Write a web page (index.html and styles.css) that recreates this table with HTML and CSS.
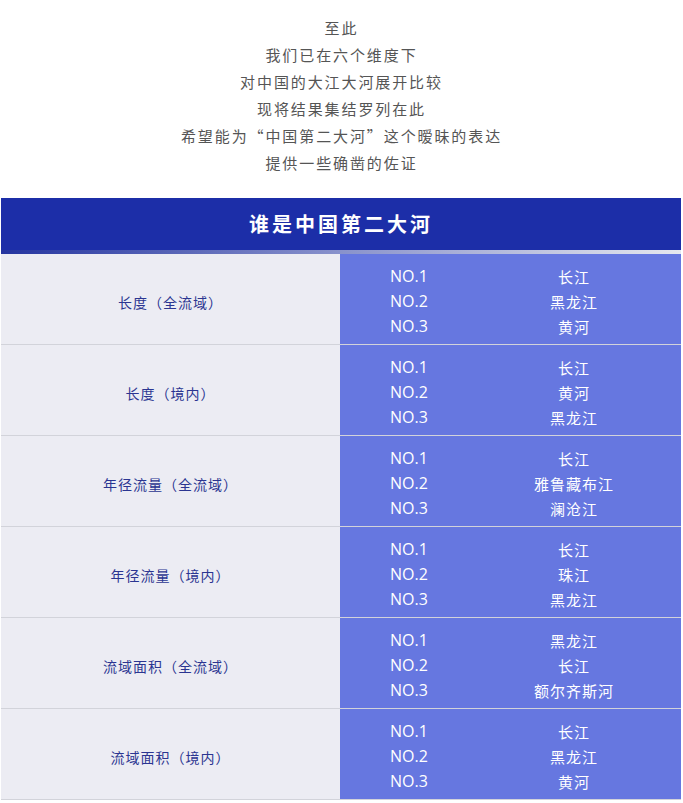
FILE: index.html
```html
<!DOCTYPE html>
<html lang="zh">
<head>
<meta charset="utf-8">
<link rel="stylesheet" href="styles.css">
</head>
<body>
<div class="intro">
  <p>至此</p>
  <p>我们已在六个维度下</p>
  <p>对中国的大江大河展开比较</p>
  <p>现将结果集结罗列在此</p>
  <p>希望能为“中国第二大河”这个暧昧的表达</p>
  <p>提供一些确凿的佐证</p>
</div>
<div class="table">
  <div class="title">谁是中国第二大河</div>
  <div class="strip"></div>
  <div class="row">
    <div class="label">长度（全流域）</div>
    <div class="ranks">
      <span class="no">NO.1</span><span class="name">长江</span>
      <span class="no">NO.2</span><span class="name">黑龙江</span>
      <span class="no">NO.3</span><span class="name">黄河</span>
    </div>
  </div>
  <div class="row">
    <div class="label">长度（境内）</div>
    <div class="ranks">
      <span class="no">NO.1</span><span class="name">长江</span>
      <span class="no">NO.2</span><span class="name">黄河</span>
      <span class="no">NO.3</span><span class="name">黑龙江</span>
    </div>
  </div>
  <div class="row">
    <div class="label">年径流量（全流域）</div>
    <div class="ranks">
      <span class="no">NO.1</span><span class="name">长江</span>
      <span class="no">NO.2</span><span class="name">雅鲁藏布江</span>
      <span class="no">NO.3</span><span class="name">澜沧江</span>
    </div>
  </div>
  <div class="row">
    <div class="label">年径流量（境内）</div>
    <div class="ranks">
      <span class="no">NO.1</span><span class="name">长江</span>
      <span class="no">NO.2</span><span class="name">珠江</span>
      <span class="no">NO.3</span><span class="name">黑龙江</span>
    </div>
  </div>
  <div class="row">
    <div class="label">流域面积（全流域）</div>
    <div class="ranks">
      <span class="no">NO.1</span><span class="name">黑龙江</span>
      <span class="no">NO.2</span><span class="name">长江</span>
      <span class="no">NO.3</span><span class="name">额尔齐斯河</span>
    </div>
  </div>
  <div class="row">
    <div class="label">流域面积（境内）</div>
    <div class="ranks">
      <span class="no">NO.1</span><span class="name">长江</span>
      <span class="no">NO.2</span><span class="name">黑龙江</span>
      <span class="no">NO.3</span><span class="name">黄河</span>
    </div>
  </div>
</div>
</body>
</html>
```
FILE: styles.css
```css
html, body {
  margin: 0;
  padding: 0;
  background: #ffffff;
}
body {
  font-family: "Noto Sans CJK SC", "Noto Sans", sans-serif;
}
.intro {
  padding-top: 14px;
  padding-bottom: 22px;
  text-align: center;
  color: #555555;
  font-size: 15px;
  letter-spacing: 1.9px;
}
.intro p {
  margin: 0;
  line-height: 27px;
}
.table {
  margin: 0 2px 0 1px;
}
.title {
  background: #1c2ea8;
  color: #ffffff;
  font-weight: bold;
  font-size: 20px;
  letter-spacing: 3px;
  text-align: center;
  height: 52px;
  line-height: 52px;
}
.strip {
  height: 4px;
  background: linear-gradient(to right, #24349f 0%, #7f89c8 45%, #e6e8ef 100%);
}
.row {
  display: grid;
  grid-template-columns: 339px 1fr;
  border-bottom: 1px solid #d2d3da;
}
.label {
  background: #ececf3;
  color: #2b3591;
  font-size: 14px;
  letter-spacing: 1px;
  display: flex;
  align-items: center;
  justify-content: center;
  padding: 10px 0 5px;
}
.ranks {
  background: #6677e0;
  color: #ffffff;
  font-size: 15px;
  letter-spacing: 1px;
  display: grid;
  grid-template-columns: 100px 1fr;
  grid-auto-rows: 25px;
  line-height: 25px;
  padding: 10px 23px 5px 50px;
}
.no {
  font-family: "Open Sans", "Noto Sans", sans-serif;
  font-size: 16px;
  font-weight: 500;
  letter-spacing: 0;
}
.name {
  text-align: center;
}
```
